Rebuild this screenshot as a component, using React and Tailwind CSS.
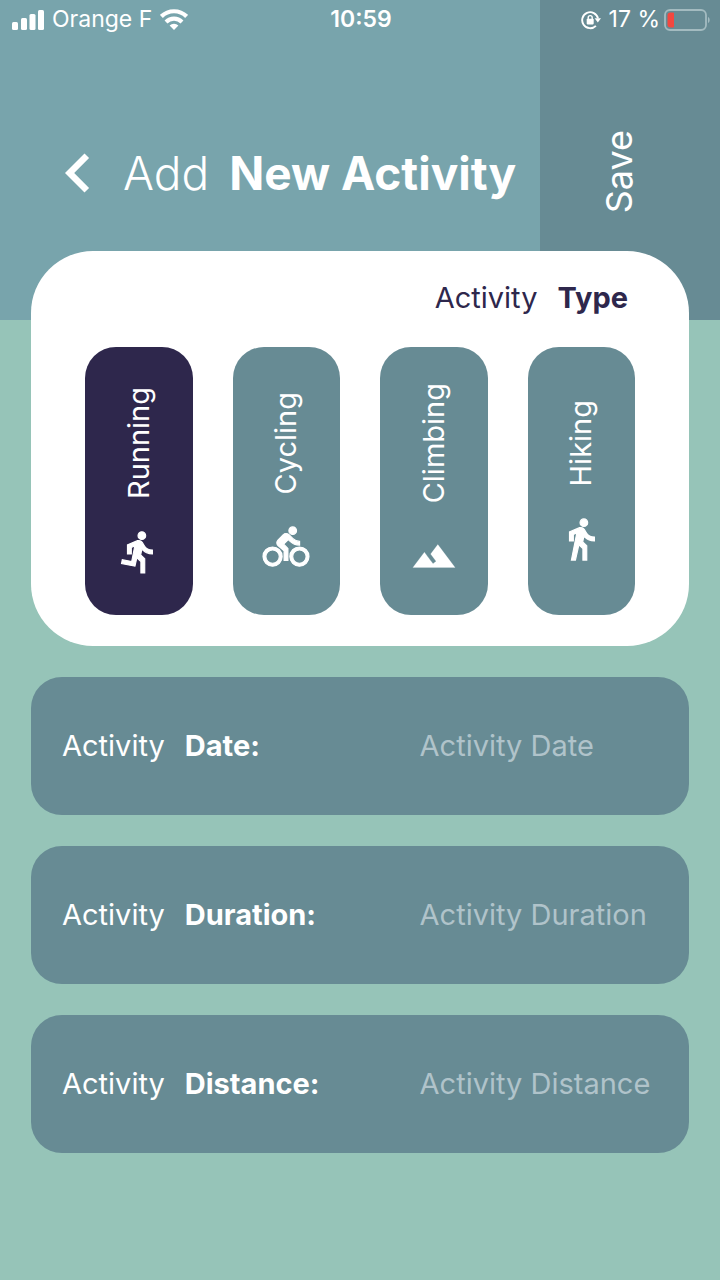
import { useState } from "react";
import { MdChevronLeft } from "react-icons/md";

const activityTypes = [
  {
    name: "Running",
    stroke: 0.6,
    path: "M13.49 5.48c1.1 0 2-.9 2-2s-.9-2-2-2-2 .9-2 2 .9 2 2 2zm-3.6 13.9l1-4.4 2.1 2v6h2v-7.5l-2.1-2 .6-3c1.3 1.5 3.3 2.5 5.5 2.5v-2c-1.9 0-3.5-1-4.3-2.4l-1-1.6c-.4-.6-1-1-1.7-1-.3 0-.5.1-.8.1l-5.2 2.2v4.7h2v-3.4l1.8-.7-1.6 8.1-4.9-1-.4 2 7 1.4z",
  },
  {
    name: "Cycling",
    stroke: 0.6,
    path: "M15.5 5.5c1.1 0 2-.9 2-2s-.9-2-2-2-2 .9-2 2 .9 2 2 2zM5 12c-2.8 0-5 2.2-5 5s2.2 5 5 5 5-2.2 5-5-2.2-5-5-5zm0 8.5c-1.9 0-3.5-1.6-3.5-3.5s1.6-3.5 3.5-3.5 3.5 1.6 3.5 3.5-1.6 3.5-3.5 3.5zm5.8-10l2.4-2.4.8.8c1.3 1.3 3 2.1 5.1 2.1V9c-1.5 0-2.7-.6-3.6-1.5l-1.9-1.9c-.5-.4-1-.6-1.6-.6s-1.1.2-1.4.6L7.8 8.4c-.4.4-.6.9-.6 1.4 0 .6.2 1.1.6 1.4L11 14v5h2v-6.2l-2.2-2.3zM19 12c-2.8 0-5 2.2-5 5s2.2 5 5 5 5-2.2 5-5-2.2-5-5-5zm0 8.5c-1.9 0-3.5-1.6-3.5-3.5s1.6-3.5 3.5-3.5 3.5 1.6 3.5 3.5-1.6 3.5-3.5 3.5z",
  },
  {
    name: "Climbing",
    stroke: 0.1,
    path: "M14 6l-3.75 5 2.85 3.8-1.6 1.2C9.81 13.75 7 10 7 10l-6 8h22L14 6z",
  },
  {
    name: "Hiking",
    stroke: 0.6,
    path: "M13.5 5.5c1.1 0 2-.9 2-2s-.9-2-2-2-2 .9-2 2 .9 2 2 2zM9.8 8.9L7 23h2.1l1.8-8 2.1 2v6h2v-7.5l-2.1-2 .6-3C14.8 12 16.8 13 19 13v-2c-1.9 0-3.5-1-4.3-2.4l-1-1.6c-.4-.6-1-1-1.7-1-.3 0-.5.1-.8.1L6 8.3V13h2V9.6l1.8-.7z",
  },
];

const fields = [
  { id: "date", label: "Date:", placeholder: "Activity Date" },
  { id: "duration", label: "Duration:", placeholder: "Activity Duration" },
  { id: "distance", label: "Distance:", placeholder: "Activity Distance" },
];

function ActivityIcon({ path, stroke }) {
  return (
    <svg
      width="46"
      height="46"
      viewBox="0 0 24 24"
      fill="currentColor"
      stroke="currentColor"
      strokeWidth={stroke}
      className="overflow-visible"
      aria-hidden="true"
    >
      <path d={path} />
    </svg>
  );
}

function SignalIcon() {
  return (
    <svg width="32" height="20" viewBox="0 0 32 20" fill="currentColor" aria-hidden="true">
      <rect x="0" y="12" width="6" height="8" rx="1.5" />
      <rect x="9" y="8" width="6" height="12" rx="1.5" />
      <rect x="17.5" y="4" width="6" height="16" rx="1.5" />
      <rect x="26" y="0" width="6" height="20" rx="1.5" />
    </svg>
  );
}

function WifiIcon() {
  return (
    <svg width="28" height="21" viewBox="0 0 28 21" aria-hidden="true">
      <g fill="none" stroke="currentColor" strokeWidth="4.2">
        <path d="M1.4 7.4a18 18 0 0 1 25.2 0" />
        <path d="M6 12.9a11.6 11.6 0 0 1 16 0" />
      </g>
      <path fill="currentColor" d="M14 21l-4.4-4.4a6.4 6.4 0 0 1 8.8 0z" />
    </svg>
  );
}

function RotationLockIcon() {
  return (
    <svg width="20" height="20" viewBox="0 0 20 20" aria-hidden="true">
      <path
        d="M14.9 15.8A8 8 0 1 1 17 8.4"
        fill="none"
        stroke="currentColor"
        strokeWidth="1.9"
      />
      <path d="M13.6 8.2H20l-3.2 4.2z" fill="currentColor" />
      <rect x="5.7" y="8.8" width="7" height="5.6" rx="0.8" fill="currentColor" />
      <path
        d="M7.2 9V7.6a2 2 0 0 1 4 0V9"
        fill="none"
        stroke="currentColor"
        strokeWidth="1.4"
      />
    </svg>
  );
}

function BatteryIcon() {
  return (
    <svg width="46" height="22" viewBox="0 0 46 22" aria-hidden="true">
      <rect
        x="1"
        y="1"
        width="41"
        height="20"
        rx="5"
        fill="none"
        stroke="#a3bbc0"
        strokeWidth="1.8"
      />
      <path d="M44 8v6c2.2-1 2.2-5 0-6z" fill="#a3bbc0" />
      <path d="M6.5 3.5H9a1 1 0 0 1 1 1v13a1 1 0 0 1-1 1H6.5a3 3 0 0 1-3-3v-9a3 3 0 0 1 3-3z" fill="#f4473f" />
    </svg>
  );
}

function StatusBar() {
  return (
    <div className="absolute inset-x-0 top-0 grid h-[39px] grid-cols-3 items-center pr-[10px] pl-3 text-[23px] text-white">
      <div className="flex items-center gap-2">
        <SignalIcon />
        <span className="whitespace-nowrap">Orange F</span>
        <WifiIcon />
      </div>
      <time className="text-center font-semibold">10:59</time>
      <div className="flex items-center justify-end gap-1">
        <RotationLockIcon />
        <span className="ml-1 whitespace-nowrap">17 %</span>
        <BatteryIcon />
      </div>
    </div>
  );
}

export default function App() {
  const [selected, setSelected] = useState("Running");

  return (
    <div className="min-h-screen bg-[#96c4b8] font-['Inter','Liberation_Sans',sans-serif]">
      <header className="relative grid h-80 grid-cols-4 bg-[#78a4ac] text-white">
        <div className="col-span-3 flex items-center pt-[26px] pl-[39px]">
          <button type="button" aria-label="Back">
            <MdChevronLeft size={78} />
          </button>
          <h1 className="ml-[6px] flex gap-5 text-[46px] whitespace-nowrap">
            <span className="font-light">Add</span>
            <span className="font-bold">New Activity</span>
          </h1>
        </div>
        <button
          type="button"
          className="flex items-center justify-center bg-[#678b94] pt-6 pr-[22px] text-4xl"
        >
          <span className="rotate-180 [writing-mode:vertical-rl]">Save</span>
        </button>
        <StatusBar />
      </header>

      <main className="relative -mt-[69px] flex flex-col gap-[31px] px-[31px] pb-8">
        <section className="rounded-[62px] bg-white px-[54px] pt-[25px] pb-[31px]">
          <h2 className="flex justify-end gap-5 pr-[7px] text-[29px] leading-[44px] text-[#2e274c]">
            <span>Activity</span>
            <span className="font-bold">Type</span>
          </h2>
          <div className="mt-[27px] grid grid-cols-4 gap-10">
            {activityTypes.map(({ name, path, stroke }) => (
              <button
                key={name}
                type="button"
                aria-pressed={selected === name}
                onClick={() => setSelected(name)}
                className={`flex h-[268px] flex-col items-center justify-center gap-[30px] rounded-[31px] text-[29px] text-white ${
                  selected === name ? "bg-[#2e274c]" : "bg-[#678b94]"
                }`}
              >
                <span className="rotate-180 leading-8 [writing-mode:vertical-rl]">{name}</span>
                <ActivityIcon path={path} stroke={stroke} />
              </button>
            ))}
          </div>
        </section>

        {fields.map(({ id, label, placeholder }) => (
          <div
            key={id}
            className="flex h-[138px] items-center rounded-[31px] bg-[#678b94] px-[31px] text-[29px] text-white"
          >
            <label htmlFor={id} className="flex w-3/5 shrink-0 gap-5">
              <span>Activity</span>
              <span className="font-bold">{label}</span>
            </label>
            <input
              id={id}
              type="text"
              placeholder={placeholder}
              className="min-w-0 flex-1 bg-transparent outline-none placeholder:text-[#b0c3ca]"
            />
          </div>
        ))}
      </main>
    </div>
  );
}
